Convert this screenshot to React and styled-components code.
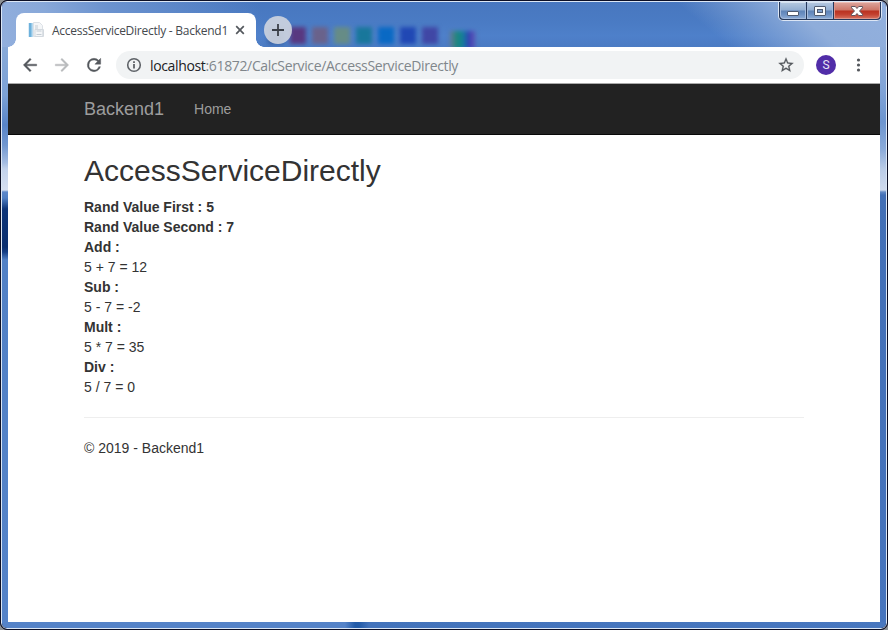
import React from "react";
import styled, { createGlobalStyle, css } from "styled-components";

const GlobalStyle = createGlobalStyle`
  * { box-sizing: border-box; }
  body { margin: 0; background: #8d9194; overflow: hidden; }
`;

const uiFont = css`
  font-family: "Open Sans", "Noto Sans", sans-serif;
`;

const WindowShell = styled.div`
  width: 888px;
  height: 630px;
  border: 1px solid #0c0f25;
  border-radius: 7px;
  overflow: hidden;
  background: #0c0f25;
`;

const WindowFrame = styled.div`
  width: 100%;
  height: 100%;
  display: grid;
  grid-template: 45px 1fr 6px / 6px 1fr 6px;
  border: 1px solid #dce7f5;
  border-radius: 6px;
  overflow: hidden;
`;

const TitleBar = styled.header`
  grid-column: 1 / -1;
  position: relative;
  display: flex;
  align-items: flex-start;
  overflow: hidden;
  background:
    linear-gradient(220deg, #92b0de 0, #8fadda 65px, rgba(143, 173, 218, 0) 135px),
    linear-gradient(75deg, #92afdd 0, #88a8d9 50px, #6c93cf 110px, rgba(74, 124, 196, 0) 260px),
    linear-gradient(#4877bf, #4a7bc4 45%, #4e80ca 75%, #4b7bc3);
`;

const BlurredIcons = styled.div`
  position: absolute;
  left: 266px;
  top: 25px;
  display: flex;
  gap: 6px;
  filter: blur(2px);
`;

const Swatch = styled.span`
  width: 16px;
  height: 17px;
  background: ${(p) => p.$color};
`;

const RainbowSwatch = styled.span`
  width: 26px;
  height: 18px;
  margin: 4px 0 0 6px;
  background: linear-gradient(90deg, #6b7794, #14897c 30%, #177ca1 52%, #2848b2 70%, #5340b4 82%, #536fba);
`;

const Tab = styled.div`
  ${uiFont}
  position: relative;
  flex: none;
  display: flex;
  align-items: center;
  width: 240px;
  height: 34px;
  margin: 11px 0 0 14px;
  padding: 0 11px 0 12px;
  background: #fff;
  border-radius: 8px 8px 0 0;
  font-size: 12px;
  color: #45494e;

  &::before,
  &::after {
    content: "";
    position: absolute;
    bottom: 0;
    width: 8px;
    height: 8px;
  }
  &::before {
    left: -8px;
    background: radial-gradient(circle at 0 0, transparent 7.5px, #fff 8px);
  }
  &::after {
    right: -8px;
    background: radial-gradient(circle at 100% 0, transparent 7.5px, #fff 8px);
  }
`;

const TabTitle = styled.span`
  flex: 1;
  margin-left: 8px;
  white-space: nowrap;
  letter-spacing: -0.26px;
`;

const NewTabButton = styled.button`
  position: relative;
  flex: none;
  display: grid;
  place-items: center;
  width: 28px;
  height: 28px;
  margin: 14px 0 0 8px;
  padding: 0;
  border: 0;
  border-radius: 50%;
  background: rgba(211, 215, 224, 0.88);
`;

const Caption = styled.div`
  display: flex;
  width: 104px;
  height: 19px;
  margin: 0 4px 0 auto;
  border: 1px solid #dce6f5;
  border-top: 0;
  border-radius: 0 0 5px 5px;
  background: #26395b;
  padding: 0 1px 1px;
  gap: 1px;
`;

const CaptionButton = styled.button`
  display: grid;
  place-items: center;
  width: ${(p) => p.$width}px;
  padding: 0;
  border: 1px solid ${(p) => (p.$close ? "#dd968c" : "#a5bbdc")};
  border-top-color: ${(p) => (p.$close ? "#eec0b8" : "#d4e0ef")};
  border-radius: ${(p) => p.$radius || "0"};
  background: ${(p) =>
    p.$close
      ? "linear-gradient(#dba198 0, #cd7567 48%, #ba3120 52%, #c23f2e 75%, #d36957)"
      : "linear-gradient(#b2c6df 0, #91add1 48%, #5e83b7 52%, #6b8fc2 75%, #87a7d2)"};
`;

const LeftEdge = styled.div`
  background: linear-gradient(
    #88a9d8 0,
    #7da2d6 48px,
    #5884c8 78px,
    #7197d0 98px,
    #a5bde2 116px,
    #c2d2eb 122px,
    #d6dff0 143px,
    #5d88ca 145px,
    #5281c5 151px,
    #0e3579 162px,
    #0b2f6f 200px,
    #143d84 205px,
    #5281c6 213px,
    #5583c8 100%
  );
`;

const RightEdge = styled.div`
  background: linear-gradient(
    #8fadda 0,
    #80a3d7 45px,
    #6d95cf 75px,
    #8aaad9 102px,
    #bacce7 122px,
    #d0dbee 143px,
    #628ac5 145px,
    #426fb6 148px,
    #4674bd 100%
  );
`;

const BottomEdge = styled.div`
  grid-column: 1 / -1;
  background: linear-gradient(90deg, #5583c8 0, #5583c8 343px, #235ba8 353px, #235ba8 357px, #4373bb 367px, #4877bf 100%);
`;

const Browser = styled.div`
  display: flex;
  flex-direction: column;
  min-width: 0;
  background: #fff;
`;

const Toolbar = styled.div`
  flex: none;
  display: flex;
  align-items: center;
  height: 37px;
  padding: 0 11px 0 12px;
  background: #fff;
  border-bottom: 1px solid #aaa;
`;

const ToolButton = styled.button`
  display: grid;
  place-items: center;
  flex: none;
  width: 20px;
  height: 20px;
  margin-right: ${(p) => p.$gap || 0}px;
  padding: 0;
  border: 0;
  background: none;
  color: ${(p) => (p.$muted ? "#b9bbbd" : "#54585d")};
`;

const Omnibox = styled.div`
  ${uiFont}
  flex: 1;
  display: flex;
  align-items: center;
  height: 28px;
  padding: 0 8px 0 10px;
  border-radius: 14px;
  background: #f1f3f4;
  font-size: 14px;
  color: #80868b;
`;

const Url = styled.span`
  flex: 1;
  margin-left: 8px;
  white-space: nowrap;
  letter-spacing: -0.35px;
`;

const Host = styled.span`
  color: #202124;
`;

const Avatar = styled.span`
  display: grid;
  place-items: center;
  flex: none;
  width: 20px;
  height: 20px;
  margin: 0 12px;
  border-radius: 50%;
  background: #512da8;
  color: #e9e3f5;
  font: 12px/20px Roboto, sans-serif;
`;

const Navbar = styled.nav`
  flex: none;
  display: flex;
  align-items: center;
  height: 51px;
  padding-left: 76px;
  background: #222;
  border-bottom: 1px solid #080808;
  color: #9d9d9d;
  font-family: "Liberation Sans", Arial, sans-serif;
`;

const Brand = styled.span`
  font-size: 18px;
  line-height: 20px;
  margin-right: 30px;
`;

const NavLink = styled.span`
  font-size: 14px;
  line-height: 20px;
`;

const Content = styled.main`
  width: 720px;
  margin-left: 76px;
  color: #333;
  font: 14px/20px "Liberation Sans", Arial, sans-serif;
`;

const Heading = styled.h2`
  margin: 19px 0 10px;
  font-size: 30px;
  font-weight: 400;
  line-height: 33px;
`;

const Line = styled.div`
  font-weight: ${(p) => (p.$bold ? 700 : 400)};
`;

const Rule = styled.hr`
  margin: 20px 0;
  border: 0;
  border-top: 1px solid #eee;
`;

const Footer = styled.footer``;

const swatches = ["#365e9d", "#583880", "#69628b", "#668c86", "#18779b", "#0969c4", "#2048b4", "#4047a5"];

const lines = [
  { text: "Rand Value First : 5", bold: true },
  { text: "Rand Value Second : 7", bold: true },
  { text: "Add :", bold: true },
  { text: "5 + 7 = 12" },
  { text: "Sub :", bold: true },
  { text: "5 - 7 = -2" },
  { text: "Mult :", bold: true },
  { text: "5 * 7 = 35" },
  { text: "Div :", bold: true },
  { text: "5 / 7 = 0" },
];

const MaterialIcon = ({ d, size = 20, weight = 0.5 }) => (
  <svg width={size} height={size} viewBox="0 0 24 24" fill="currentColor" stroke="currentColor" strokeWidth={weight}>
    <path d={d} />
  </svg>
);

const PageIcon = () => (
  <svg width="16" height="16" viewBox="0 0 16 16">
    <path d="M.5 1h5v14h-5z" fill="#b9daf0" />
    <path d="M1 1h2.500v14H1z" fill="#6db1dc" />
    <path d="M5.500.5h6l3 3v11h-9z" fill="#f4f6f8" stroke="#dce1e6" />
    <path d="M7 4h3M7 6h3M8.500 9h5M8.500 12.500h5" stroke="#c3ccd4" />
    <path d="M7 7.500h8.500v7H7z" fill="none" stroke="#d3d9df" />
  </svg>
);

export default function App() {
  return (
    <>
      <GlobalStyle />
      <WindowShell>
        <WindowFrame>
          <TitleBar>
            <BlurredIcons>
              {swatches.map((c) => (
                <Swatch key={c} $color={c} />
              ))}
              <RainbowSwatch />
            </BlurredIcons>
            <Tab>
              <PageIcon />
              <TabTitle>AccessServiceDirectly - Backend1</TabTitle>
              <svg width="10" height="10" viewBox="0 0 10 10">
                <path d="M1.200 1.200l7.600 7.600M8.800 1.200L1.200 8.800" stroke="#54585d" strokeWidth="1.700" />
              </svg>
            </Tab>
            <NewTabButton aria-label="New tab">
              <svg width="12" height="12" viewBox="0 0 12 12">
                <path d="M6 0v12M0 6h12" stroke="#3a3f48" strokeWidth="1.800" />
              </svg>
            </NewTabButton>
            <Caption>
              <CaptionButton $width={27} $radius="0 0 0 4px" aria-label="Minimize">
                <svg width="14" height="14" viewBox="0 0 14 14">
                  <rect x="1.500" y="7.500" width="11" height="4" rx=".5" fill="#fff" stroke="#4e5a70" />
                </svg>
              </CaptionButton>
              <CaptionButton $width={26} aria-label="Maximize">
                <svg width="14" height="14" viewBox="0 0 14 14">
                  <rect x="1.500" y="2.500" width="11" height="9" rx=".5" fill="#f8fafc" stroke="#4e5a70" />
                  <rect x="4.500" y="5.500" width="5" height="3" fill="#7f9fcb" stroke="#4e5a70" />
                </svg>
              </CaptionButton>
              <CaptionButton $width={47} $close $radius="0 0 4px 0" aria-label="Close">
                <svg width="14" height="14" viewBox="0 0 14 14">
                  <path d="M1.500 2.500h3.800L7 4.500l1.700-2h3.800v1.300L9.500 7l3 3.200v1.300H8.700L7 9.500l-1.700 2H1.500v-1.300l3-3.200-3-3.200z" fill="#fff" stroke="#60545d" />
                </svg>
              </CaptionButton>
            </Caption>
          </TitleBar>
          <LeftEdge />
          <Browser>
            <Toolbar>
              <ToolButton $gap={12} aria-label="Back">
                <MaterialIcon d="M20 11H7.830l5.590-5.590L12 4l-8 8 8 8 1.410-1.410L7.830 13H20v-2z" />
              </ToolButton>
              <ToolButton $gap={12} $muted aria-label="Forward">
                <MaterialIcon d="M12 4l-1.410 1.410L16.170 11H4v2h12.170l-5.580 5.590L12 20l8-8z" />
              </ToolButton>
              <ToolButton $gap={12} aria-label="Reload">
                <MaterialIcon d="M17.650 6.350A7.958 7.958 0 0 0 12 4a8 8 0 1 0 7.730 10h-2.080A6 6 0 1 1 12 6c1.660 0 3.140.69 4.220 1.780L13 11h7V4l-2.350 2.350z" />
              </ToolButton>
              <Omnibox>
                <svg width="16" height="16" viewBox="0 0 16 16">
                  <circle cx="8" cy="8" r="6.300" fill="none" stroke="#5f6368" strokeWidth="1.600" />
                  <path d="M8 7v4.500M8 4.300v1.700" stroke="#5f6368" strokeWidth="1.800" />
                </svg>
                <Url>
                  <Host>localhost</Host>:61872/CalcService/AccessServiceDirectly
                </Url>
                <ToolButton as="span">
                  <MaterialIcon
                    size={18}
                    weight={0.3}
                    d="M22 9.240l-7.190-.62L12 2 9.190 8.630 2 9.240l5.460 4.730L5.820 21 12 17.270 18.180 21l-1.630-7.030L22 9.240zM12 15.400l-3.760 2.270 1-4.280-3.320-2.880 4.380-.38L12 6.100l1.710 4.040 4.380.38-3.320 2.880 1 4.280L12 15.400z"
                  />
                </ToolButton>
              </Omnibox>
              <Avatar>S</Avatar>
              <ToolButton $gap={1} aria-label="Menu">
                <svg width="20" height="20" viewBox="0 0 20 20" fill="#54585d">
                  <circle cx="10.500" cy="5" r="1.600" />
                  <circle cx="10.500" cy="10" r="1.600" />
                  <circle cx="10.500" cy="15" r="1.600" />
                </svg>
              </ToolButton>
            </Toolbar>
            <Navbar>
              <Brand>Backend1</Brand>
              <NavLink>Home</NavLink>
            </Navbar>
            <Content>
              <Heading>AccessServiceDirectly</Heading>
              {lines.map((line) => (
                <Line key={line.text} $bold={line.bold}>
                  {line.text}
                </Line>
              ))}
              <Rule />
              <Footer>© 2019 - Backend1</Footer>
            </Content>
          </Browser>
          <RightEdge />
          <BottomEdge />
        </WindowFrame>
      </WindowShell>
    </>
  );
}
